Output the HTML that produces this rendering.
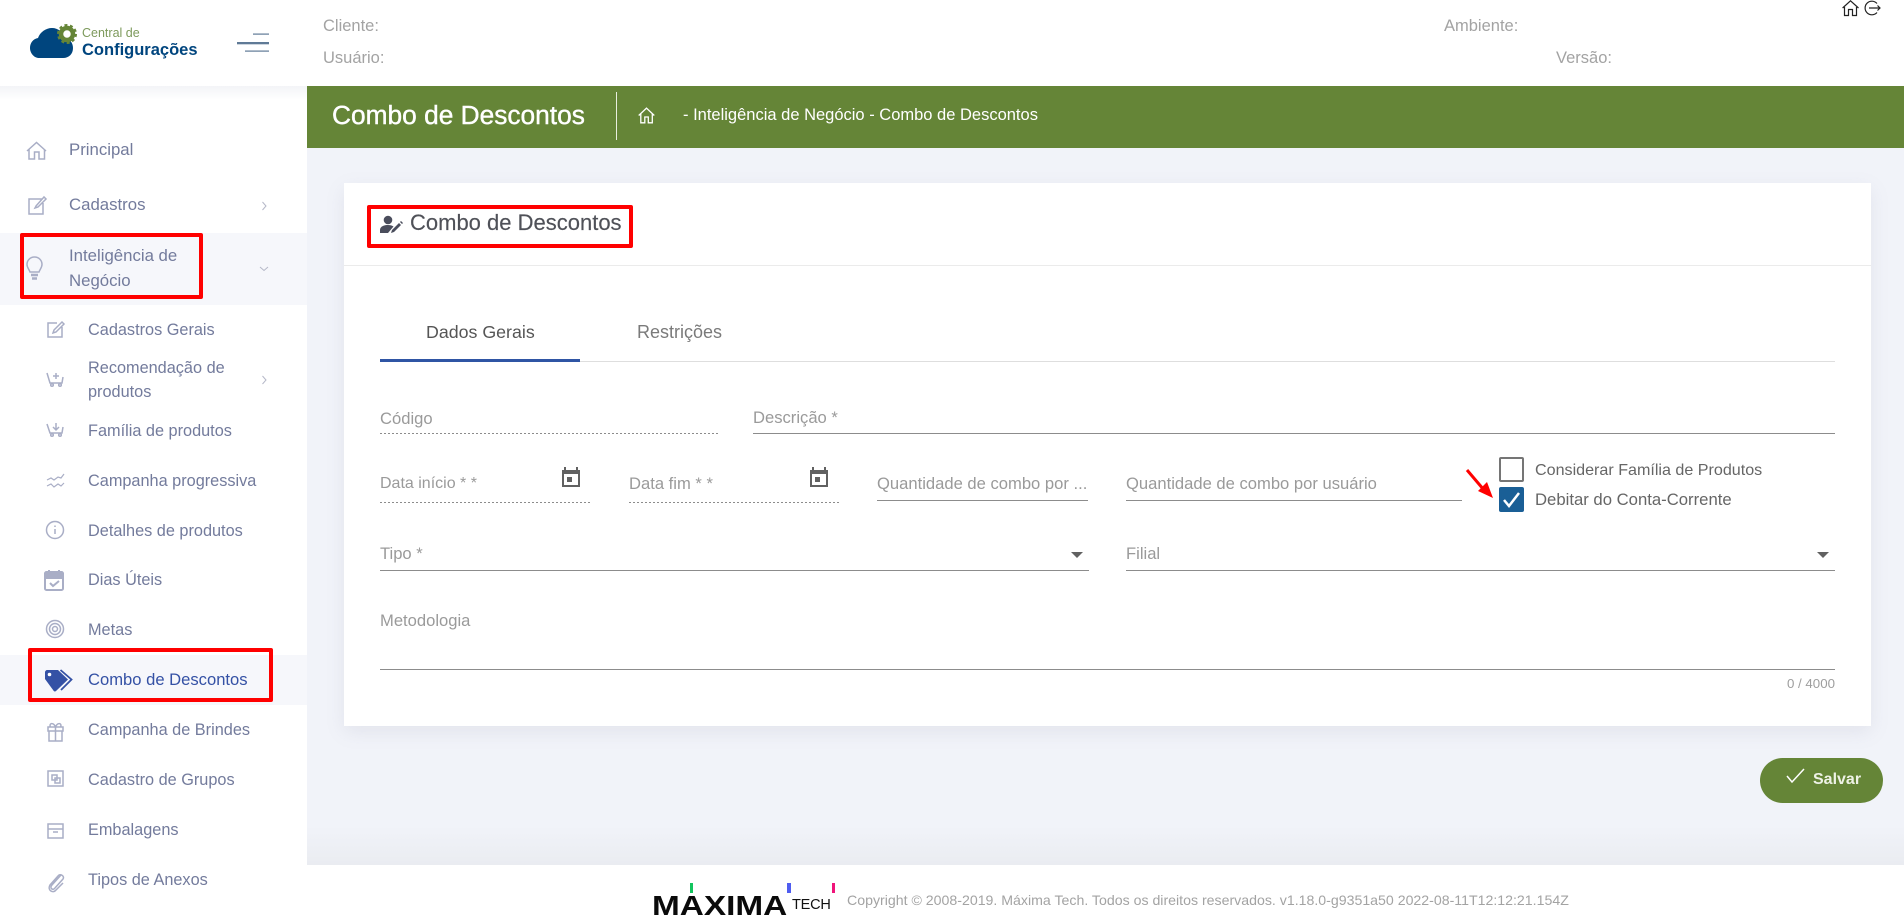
<!DOCTYPE html>
<html lang="pt"><head><meta charset="utf-8"><title>Combo de Descontos</title>
<style>
html,body{margin:0;padding:0;width:1904px;height:924px;overflow:hidden;background:#fff;font-family:"Liberation Sans",sans-serif}
*{box-sizing:border-box}
.a{position:absolute}
.t{position:absolute;white-space:nowrap;line-height:20px;height:20px}
.s{font-size:16.3px;color:#737b9c;left:88px;margin-top:1px}
.p{font-size:16.8px;left:69px}
.f{font-size:16.6px;color:#9a9a9a;margin-top:1px}
.h{font-size:16.5px;color:#a3a3a3;margin-top:1px}
.l{position:absolute;height:1px;background:#8c8c8c}
.d{position:absolute;height:1px;background:repeating-linear-gradient(90deg,#8c8c8c 0 2px,transparent 2px 4px)}
svg{position:absolute;overflow:visible}
.i{fill:none;stroke:#a9aec6;stroke-width:1.5}
.rb{position:absolute;border:4px solid #f00;border-radius:2px}
</style></head><body>
<!-- backgrounds -->
<div class="a" style="left:307px;top:86px;width:1597px;height:779px;background:linear-gradient(#f1f3f9 0,#f1f3f9 95%,#eaecf1 100%)"></div>
<div class="a" style="left:0;top:86px;width:307px;height:14px;background:linear-gradient(#f3f4f7,#fff)"></div>
<div class="a" style="left:307px;top:86px;width:1597px;height:62px;background:#658537"></div>
<div class="a" style="left:616px;top:92px;width:1px;height:48px;background:#e8eede"></div>

<!-- header -->
<svg style="left:0;top:0" width="300" height="86">
<path d="M30 48c0-5 3-9 8-10C40 32 46 28 52 28c6 0 11 4 13 10 5 1 8 5 8 10 0 6-4 10-10 10H39c-5 0-9-5-9-10z" fill="#00457e"/>
<circle cx="67" cy="34" r="6.500" fill="#fff"/>
<circle cx="67" cy="34" r="6" fill="none" stroke="#658537" stroke-width="4.500"/>
<circle cx="67" cy="34" r="9" fill="none" stroke="#658537" stroke-width="2" stroke-dasharray="3 2.650"/>
<rect x="253" y="33.500" width="16" height="1.200" fill="#5f7a96"/>
<rect x="237" y="42" width="32" height="2.300" fill="#5f7a96"/>
<rect x="245" y="50.500" width="24" height="1.200" fill="#5f7a96"/>
</svg>
<div class="t" style="left:82px;top:23px;font-size:12.5px;color:#7d9a5c">Central de</div>
<div class="t" style="left:82px;top:39.500px;font-size:16.5px;font-weight:700;color:#00457e">Configurações</div>
<div class="t h" style="left:323px;top:15px">Cliente:</div>
<div class="t h" style="left:323px;top:47px">Usuário:</div>
<div class="t h" style="left:1444px;top:15px">Ambiente:</div>
<div class="t h" style="left:1556px;top:47px">Versão:</div>
<svg style="left:1842px;top:0" width="40" height="18" fill="none" stroke="#222" stroke-width="1.200">
<path d="M.6 8 8.500.8 16.500 8M2.500 7v8.500h4V9.500h4v6h4V7"/>
<path d="M35 3.500A6.800 6.800 0 1 0 35 12.500M27 8h10.500M35.500 5.500 38 8 35.500 10.500"/>
</svg>

<!-- green bar -->
<div class="t" style="left:332px;top:105px;font-size:26.3px;color:#fff;-webkit-text-stroke:.4px #fff">Combo de Descontos</div>
<svg style="left:638px;top:107px" width="17" height="17" fill="none" stroke="#fff" stroke-width="1.300"><path d="M.7 8.500 8.500 1.200 16.300 8.500M2.800 7v8.800h4V10h3.500v5.800h4V7"/></svg>
<div class="t" style="left:683px;top:105px;font-size:16.5px;color:#fff">- Inteligência de Negócio - Combo de Descontos</div>

<!-- sidebar -->
<div class="a" style="left:0;top:233px;width:307px;height:72px;background:#f6f7fb"></div>
<div class="a" style="left:0;top:655px;width:307px;height:50px;background:#f6f7fb"></div>
<div class="t s p" style="top:139px">Principal</div>
<div class="t s p" style="top:194px">Cadastros</div>
<div class="t s p" style="top:245px">Inteligência de</div>
<div class="t s p" style="top:270px">Negócio</div>
<div class="t s" style="top:319px">Cadastros Gerais</div>
<div class="t s" style="top:357px">Recomendação de</div>
<div class="t s" style="top:381px">produtos</div>
<div class="t s" style="top:419.500px">Família de produtos</div>
<div class="t s" style="top:470px">Campanha progressiva</div>
<div class="t s" style="top:519.500px">Detalhes de produtos</div>
<div class="t s" style="top:569px">Dias Úteis</div>
<div class="t s" style="top:619px">Metas</div>
<div class="t s" style="top:669px;color:#3451a5;font-size:16.6px">Combo de Descontos</div>
<div class="t s" style="top:718.500px">Campanha de Brindes</div>
<div class="t s" style="top:768.500px">Cadastro de Grupos</div>
<div class="t s" style="top:819px">Embalagens</div>
<div class="t s" style="top:869px">Tipos de Anexos</div>

<svg style="left:0;top:0" width="307" height="924">
<g class="i">
<path d="M27 151 36.500 142.500 46 151M29 149.500V159h5.500v-7h4.500v7h5.500V149.500"/>
<path d="M42 199H29v15h14v-11M36 206l8-9 2 2-8 8-3 1z"/>
<path d="M34.500 257c-4.500 0-7.500 3.500-7.500 7.500 0 3 2 4.500 3 7.500h9c1-3 3-4.500 3-7.500 0-4-3-7.500-7.500-7.500z"/>
<path d="M31 275h7M32 278.500h5" stroke-width="2.500"/>
<path d="M57 323H48v14h14v-10M54 330l8-8 2 2-8 8-3 1z"/>
<path d="M47 373 50 383H62L63 377M56 373v6M53 376h6"/>
<circle cx="52" cy="385" r="1.300"/><circle cx="60" cy="385" r="1.300"/>
<path d="M47 424 50 433H62L63 427M56 423v6M53 427l3 3 3-3"/>
<circle cx="52" cy="435" r="1.300"/><circle cx="60" cy="435" r="1.300"/>
<path d="M47 480l4-2 3 2 4-3 3 1 3-4M47 486l4-2 3 3 4-3 3 2 3-3" stroke-width="1.200"/>
<circle cx="55" cy="530" r="8.500"/><path d="M55 529v5M55 525.500v1.500"/>
<circle cx="55" cy="629" r="8.500"/><circle cx="55" cy="629" r="5.500"/><circle cx="55" cy="629" r="2.500"/>
<path d="M48 727h15v4H48zM49 731v10h13v-10M55.500 727v14M55.500 727c-2-5-7-4-5 0M55.500 727c2-5 7-4 5 0"/>
<path d="M48 771h15v15H48zM52 775h5v5h-5zM55 778h5v5h-5z"/>
<path d="M48 824h15v14H48zM48 829h15M53 832h5"/>
<path d="M61 875 52 885c-3 3 1 6 3 3l8-9c2-3-3-6-5-3l-8 9c-3 5 3 9 6 5l7-7"/>
</g>
<path d="M262.500 202 266 206 262.500 210M260 267 264 270.500 268 267M262.500 376 266 380 262.500 384" stroke="#b5b8c8" stroke-width="1" fill="none"/>
<rect x="45" y="572" width="18" height="18" rx="1.500" fill="none" stroke="#a9aec6" stroke-width="2"/>
<path d="M45 574h18v4H45zM49 570v3M59 570v3" stroke="#a9aec6" stroke-width="2" fill="#a9aec6"/>
<path d="M50 583l3 3 6-5" stroke="#a9aec6" stroke-width="2" fill="none"/>
<path d="M45 672.500c0-1.500 1-2.500 2.500-2.500H58L68 679.500 56 691c-.700.700-1.500.700-2.200 0L45 679z" fill="#3451a5"/>
<circle cx="49.500" cy="674.500" r="1.800" fill="#fff"/>
<path d="M60.500 670 71.500 679.500 61 690" fill="none" stroke="#3451a5" stroke-width="1.800"/>
</svg>
<div class="rb" style="left:20px;top:233px;width:183px;height:66px"></div>
<div class="rb" style="left:28px;top:648px;width:245px;height:54px"></div>

<!-- card -->
<div class="a" style="left:344px;top:183px;width:1527px;height:543px;background:#fff;box-shadow:0 6px 18px rgba(120,125,150,.12)"></div>
<div class="a" style="left:344px;top:265px;width:1527px;height:1px;background:#ebebeb"></div>
<div class="rb" style="left:367px;top:205px;width:266px;height:43px"></div>
<svg style="left:380px;top:214px" width="24" height="20" fill="#4a4d5c">
<circle cx="8" cy="6" r="4.300"/><path d="M0 19v-3c0-3 3-5 8-5 2.500 0 4 .5 5.500 1.500L8 19z"/><path d="M11 19l1-3 7-7 2 2-7 7zM20 8l1-1 2 2-1 1z"/>
</svg>
<div class="t" style="left:410px;top:213px;font-size:22px;color:#4f5158;-webkit-text-stroke:.15px #4f5158">Combo de Descontos</div>

<!-- tabs -->
<div class="t" style="left:426px;top:322px;font-size:17.8px;color:#555">Dados Gerais</div>
<div class="t" style="left:637px;top:322px;font-size:18px;color:#7a7a7a">Restrições</div>
<div class="a" style="left:380px;top:361px;width:1455px;height:1px;background:#dedede"></div>
<div class="a" style="left:380px;top:359px;width:200px;height:3px;background:#2f55a4"></div>

<!-- fields -->
<div class="t f" style="left:380px;top:407.500px">Código</div><div class="d" style="left:380px;top:433px;width:338px"></div>
<div class="t f" style="left:753px;top:407px">Descrição *</div><div class="l" style="left:753px;top:433px;width:1082px"></div>
<div class="t f" style="left:380px;top:473px;font-size:16px">Data início * *</div><div class="d" style="left:380px;top:502px;width:211px"></div>
<div class="t f" style="left:629px;top:473px">Data fim * *</div><div class="d" style="left:629px;top:502px;width:211px"></div>
<svg style="left:562px;top:467px" width="18" height="20" fill="#616161"><path d="M0 3h2V0h2v3h10V0h2v3h2v17H0zM2 7v11h14V7zM5 10h5v5H5z" fill-rule="evenodd"/></svg>
<svg style="left:810px;top:467px" width="18" height="20" fill="#616161"><path d="M0 3h2V0h2v3h10V0h2v3h2v17H0zM2 7v11h14V7zM5 10h5v5H5z" fill-rule="evenodd"/></svg>
<div class="t f" style="left:877px;top:473px">Quantidade de combo por ...</div><div class="l" style="left:877px;top:500px;width:211px"></div>
<div class="t f" style="left:1126px;top:473px">Quantidade de combo por usuário</div><div class="l" style="left:1126px;top:500px;width:336px"></div>
<div class="a" style="left:1499px;top:457px;width:25px;height:25px;border:2px solid #757575;border-radius:2px"></div>
<div class="a" style="left:1499px;top:487px;width:25px;height:25px;background:#1a5f96;border-radius:2px"></div>
<svg style="left:1499px;top:487px" width="25" height="25" fill="none" stroke="#fff" stroke-width="2.500"><path d="M5 13l5 6L20 6"/></svg>
<div class="t" style="left:1535px;top:460px;font-size:16.1px;color:#666">Considerar Família de Produtos</div>
<div class="t" style="left:1535px;top:490px;font-size:16.7px;color:#666">Debitar do Conta-Corrente</div>
<svg style="left:1460px;top:465px" width="40" height="40"><path d="M7 5 24 25" stroke="#f00" stroke-width="3"/><path d="M33 33 18 26 27 17z" fill="#f00"/></svg>
<div class="t f" style="left:380px;top:543px">Tipo *</div><div class="l" style="left:380px;top:570px;width:709px"></div>
<div class="t f" style="left:1126px;top:543px">Filial</div><div class="l" style="left:1126px;top:570px;width:709px"></div>
<div class="a" style="left:1071px;top:552px;border:6px solid transparent;border-top:6px solid #616161;border-bottom:0"></div>
<div class="a" style="left:1817px;top:552px;border:6px solid transparent;border-top:6px solid #616161;border-bottom:0"></div>
<div class="t f" style="left:380px;top:610px">Metodologia</div><div class="l" style="left:380px;top:669px;width:1455px"></div>
<div class="t" style="right:69px;top:674px;font-size:13.3px;color:#9e9e9e">0 / 4000</div>

<!-- save -->
<div class="a" style="left:1760px;top:758px;width:123px;height:45px;border-radius:23px;background:#658537"></div>
<svg style="left:1786px;top:768px" width="19" height="15" fill="none" stroke="#fff" stroke-width="1.500"><path d="M1 8l5 6L18 1"/></svg>
<div class="t" style="left:1813px;top:770px;font-size:16px;font-weight:700;color:#eef2e6">Salvar</div>

<!-- footer -->
<div class="a" style="left:307px;top:865px;width:1597px;height:59px;background:#fff"></div>
<div class="t" style="left:652px;top:893px;font-size:29px;line-height:26px;height:26px;font-weight:700;color:#0a0a0a;transform:scale(1.15,.95);transform-origin:0 100%">MAXIMA</div>
<div class="t" style="left:792px;top:895px;font-size:14.5px;color:#111;letter-spacing:-.2px">TECH</div>
<div class="a" style="left:690px;top:883px;width:3px;height:10px;background:#12c45e"></div>
<div class="a" style="left:787px;top:883px;width:4px;height:10px;background:#4f5df0"></div>
<div class="a" style="left:832px;top:883px;width:3px;height:10px;background:#f0147a"></div>
<div class="t" style="left:847px;top:889.500px;font-size:14.15px;color:#a3a3a3">Copyright © 2008-2019. Máxima Tech. Todos os direitos reservados. v1.18.0-g9351a50 2022-08-11T12:12:21.154Z</div>
</body></html>
